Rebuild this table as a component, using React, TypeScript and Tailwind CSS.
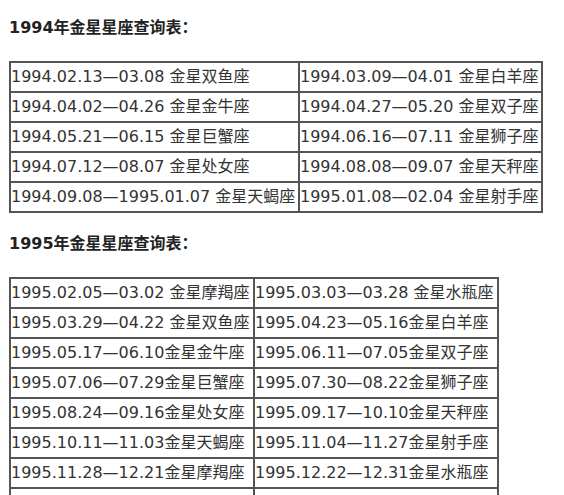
import React from "react";

const t1: [string, string][] = [
  ["1994.02.13—03.08 金星双鱼座", "1994.03.09—04.01 金星白羊座"],
  ["1994.04.02—04.26 金星金牛座", "1994.04.27—05.20 金星双子座"],
  ["1994.05.21—06.15 金星巨蟹座", "1994.06.16—07.11 金星狮子座"],
  ["1994.07.12—08.07 金星处女座", "1994.08.08—09.07 金星天秤座"],
  ["1994.09.08—1995.01.07 金星天蝎座", "1995.01.08—02.04 金星射手座"],
];

const t2: [string, string][] = [
  ["1995.02.05—03.02 金星摩羯座", "1995.03.03—03.28 金星水瓶座"],
  ["1995.03.29—04.22 金星双鱼座", "1995.04.23—05.16金星白羊座"],
  ["1995.05.17—06.10金星金牛座", "1995.06.11—07.05金星双子座"],
  ["1995.07.06—07.29金星巨蟹座", "1995.07.30—08.22金星狮子座"],
  ["1995.08.24—09.16金星处女座", "1995.09.17—10.10金星天秤座"],
  ["1995.10.11—11.03金星天蝎座", "1995.11.04—11.27金星射手座"],
  ["1995.11.28—12.21金星摩羯座", "1995.12.22—12.31金星水瓶座"],
  ["", ""],
];

const font = { fontFamily: '"DejaVu Sans", Verdana, "Noto Sans CJK SC", sans-serif' };

export default function App() {
  return (
    <div className="bg-white w-[564px] h-[495px] overflow-hidden pl-[9px] text-[#333]" style={font}>
      <div className="mt-[16px] h-[24px] leading-[24px] text-[16px] font-bold text-[#222] whitespace-nowrap">
        1994年金星星座查询表：
      </div>
      <div className="mt-[21px] grid grid-cols-[289px_243px] w-[534px] border-l-2 border-t-2 border-[#555]">
        {t1.map((r, i) => (
          <React.Fragment key={i}>
            <div className="h-[30px] border-r-2 border-b-2 border-[#555] text-[16px] leading-[28px] whitespace-nowrap overflow-hidden">{r[0]}</div>
            <div className="h-[30px] border-r-2 border-b-2 border-[#555] text-[16px] leading-[28px] whitespace-nowrap overflow-hidden">{r[1]}</div>
          </React.Fragment>
        ))}
      </div>
      <div className="mt-[19px] h-[24px] leading-[24px] text-[16px] font-bold text-[#222] whitespace-nowrap">
        1995年金星星座查询表：
      </div>
      <div className="mt-[21px] grid grid-cols-[244px_244px] w-[490px] border-l-2 border-t-2 border-[#555]">
        {t2.map((r, i) => (
          <React.Fragment key={i}>
            <div className="h-[30px] border-r-2 border-b-2 border-[#555] text-[16px] leading-[28px] whitespace-nowrap overflow-hidden">{r[0]}</div>
            <div className="h-[30px] border-r-2 border-b-2 border-[#555] text-[16px] leading-[28px] whitespace-nowrap overflow-hidden">{r[1]}</div>
          </React.Fragment>
        ))}
      </div>
    </div>
  );
}
